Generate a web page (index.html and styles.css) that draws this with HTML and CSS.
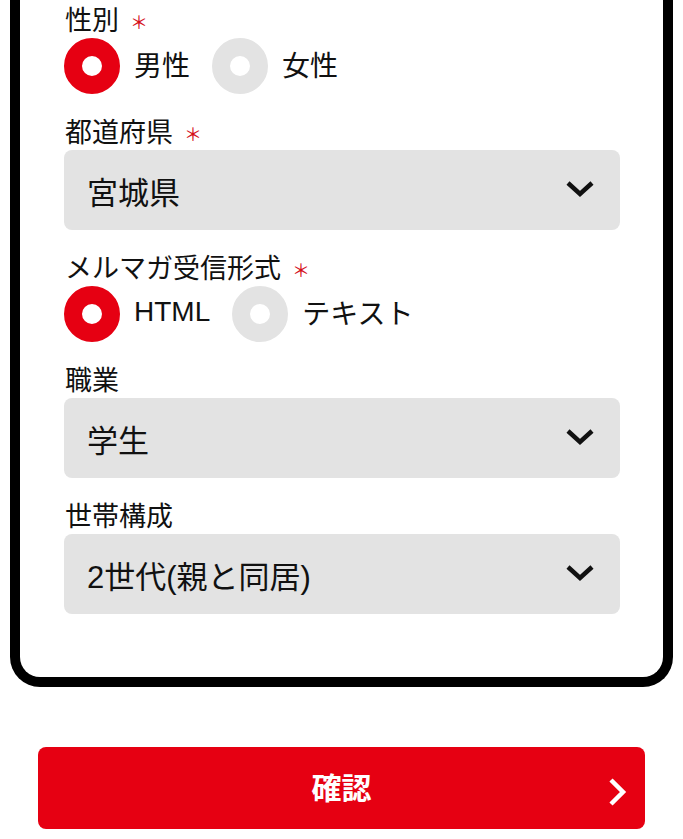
FILE: index.html
```html
<!DOCTYPE html>
<html lang="ja">
<head>
  <meta charset="UTF-8">
  <meta name="viewport" content="width=device-width, initial-scale=1.0">
  <title>会員登録</title>
  <link rel="stylesheet" href="styles.css">
</head>
<body>
  <div class="page">
    <form class="card">
      <div class="field">
        <div class="label">性別<span class="req">＊</span></div>
        <div class="radios">
          <label class="radio checked"><span class="dot"></span>男性</label>
          <label class="radio"><span class="dot"></span>女性</label>
        </div>
      </div>
      <div class="field">
        <div class="label">都道府県<span class="req">＊</span></div>
        <div class="select">
          <span>宮城県</span>
          <svg class="chev" width="30" height="18" viewBox="0 0 30 18"><path d="M3 3 L15 14 L27 3" fill="none" stroke="#111" stroke-width="4.5"/></svg>
        </div>
      </div>
      <div class="field">
        <div class="label">メルマガ受信形式<span class="req">＊</span></div>
        <div class="radios">
          <label class="radio checked"><span class="dot"></span>HTML</label>
          <label class="radio"><span class="dot"></span>テキスト</label>
        </div>
      </div>
      <div class="field">
        <div class="label">職業</div>
        <div class="select">
          <span>学生</span>
          <svg class="chev" width="30" height="18" viewBox="0 0 30 18"><path d="M3 3 L15 14 L27 3" fill="none" stroke="#111" stroke-width="4.5"/></svg>
        </div>
      </div>
      <div class="field">
        <div class="label">世帯構成</div>
        <div class="select">
          <span>2世代(親と同居)</span>
          <svg class="chev" width="30" height="18" viewBox="0 0 30 18"><path d="M3 3 L15 14 L27 3" fill="none" stroke="#111" stroke-width="4.5"/></svg>
        </div>
      </div>
    </form>
    <button class="submit" type="button">
      確認
      <svg class="arrow" width="22" height="30" viewBox="0 0 22 30"><path d="M4 3 L16 15 L4 27" fill="none" stroke="#fff" stroke-width="4.5"/></svg>
    </button>
  </div>
</body>
</html>
```

FILE: styles.css
```css
body {
  margin: 0;
  background-color: #fff;
  font-family: "Liberation Sans", "Noto Sans CJK JP", sans-serif;
  color: #111;
}
.page {
  padding: 0 10px;
}
.card {
  display: flex;
  flex-direction: column;
  gap: 19px;
  border: 10px solid #000;
  border-top: 0;
  border-radius: 0 0 30px 30px;
  padding: 1px 43px 63px 44px;
}
.label {
  display: flex;
  align-items: center;
  height: 34px;
  margin-bottom: 3px;
  font-size: 27px;
  padding-left: 1px;
}
.req {
  color: #d40d19;
  font-size: 18px;
  margin: 6px 0 0 11px;
}
.radios {
  display: flex;
  gap: 22px;
}
.radio {
  display: flex;
  align-items: center;
  gap: 14px;
  font-size: 28px;
  padding-bottom: 4px;
}
.dot {
  width: 20px;
  height: 20px;
  margin-bottom: -4px;
  border: 18px solid #e3e3e3;
  border-radius: 50%;
  background-color: #fff;
}
.radio.checked .dot {
  border-color: #e60012;
}
.select {
  display: flex;
  justify-content: space-between;
  align-items: center;
  height: 80px;
  padding: 0 25px 0 23px;
  background-color: #e3e3e3;
  border-radius: 8px;
  font-size: 31px;
}
.chev {
  margin-top: -3px;
}
.submit {
  position: relative;
  display: flex;
  justify-content: center;
  align-items: center;
  width: calc(100% - 56px);
  height: 82px;
  margin: 60px 28px 0;
  padding-bottom: 6px;
  border: none;
  border-radius: 8px;
  background-color: #e60012;
  color: #fff;
  font-family: "Noto Sans CJK JP", sans-serif;
  font-size: 30px;
  font-weight: bold;
}
.arrow {
  position: absolute;
  right: 16px;
  top: 30px;
}
```
